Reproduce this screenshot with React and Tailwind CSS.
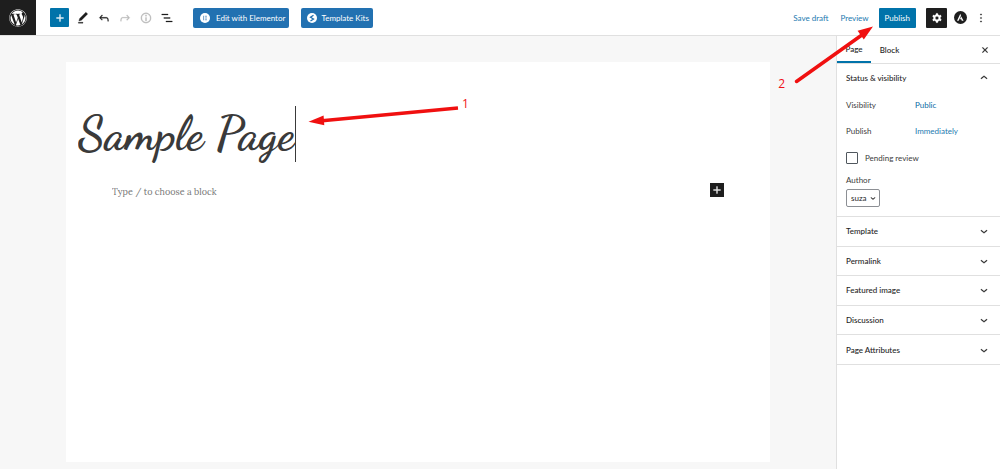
import { useState } from "react";
import { FaWordpress } from "react-icons/fa";

const paths = {
  plus: "M18 11.2h-5.2V6h-1.6v5.2H6v1.6h5.2V18h1.6v-5.2H18z",
  edit: "M20.1 5.1L16.9 2 6.2 12.7l-1.3 4.4 4.5-1.3L20.1 5.1zM4 20.8h8v-1.5H4v1.5z",
  undo: "M18.3 11.7c-.6-.6-1.4-.9-2.3-.9H6.7l2.9-3.3-1.1-1-4.5 5L8.5 16l1-1-2.7-2.7H16c.5 0 .9.2 1.3.5 1 1 1 3.4 1 4.5v.3h1.5v-.2c0-1.5 0-4.3-1.5-5.7z",
  redo: "M15.6 6.5l-1.1 1 2.9 3.3H8c-.9 0-1.7.3-2.3.9-1.4 1.5-1.4 4.2-1.4 5.6v.2h1.5v-.3c0-1.1 0-3.5 1-4.5.3-.3.7-.5 1.3-.5h9.2L14.5 15l1.1 1.1 4.6-4.6-4.6-5z",
  info: "M12 3.2c-4.8 0-8.8 3.9-8.8 8.8 0 4.8 3.9 8.8 8.8 8.8 4.8 0 8.8-3.9 8.8-8.8 0-4.8-4-8.8-8.8-8.8zm0 16c-4 0-7.2-3.3-7.2-7.2C4.8 8 8 4.8 12 4.8s7.2 3.3 7.2 7.2c0 4-3.2 7.2-7.2 7.2zM11 17h2v-6h-2v6zm0-8h2V7h-2v2z",
  list: "M13.8 5.2H3v1.5h10.8V5.2zm-3.6 12v1.5H21v-1.5H10.2zm7.2-6H6.6v1.5h10.8v-1.5z",
  close: "M12 13.06l3.712 3.713 1.061-1.06L13.061 12l3.712-3.712-1.06-1.06L12 10.938 8.288 7.227l-1.061 1.06L10.939 12l-3.712 3.712 1.06 1.061L12 13.061z",
  down: "M17.5 11.6L12 16l-5.5-4.4.9-1.2L12 14l4.5-3.6 1 1.2z",
  up: "M6.5 12.4L12 8l5.5 4.4-.9 1.2L12 10l-4.5 3.6-1-1.2z",
  more: "M13 19h-2v-2h2v2zm0-6h-2v-2h2v2zm0-6h-2V5h2v2z",
  cog: "M10.289 4.836A1 1 0 0111.275 4h1.306a1 1 0 01.987.836l.244 1.466c.787.26 1.503.679 2.108 1.218l1.393-.522a1 1 0 011.216.437l.653 1.13a1 1 0 01-.23 1.273l-1.148.944a6.025 6.025 0 010 2.435l1.149.946a1 1 0 01.23 1.272l-.653 1.13a1 1 0 01-1.216.437l-1.394-.522c-.605.54-1.32.958-2.108 1.218l-.244 1.466a1 1 0 01-.987.836h-1.306a1 1 0 01-.986-.836l-.244-1.466a5.995 5.995 0 01-2.108-1.218l-1.394.522a1 1 0 01-1.217-.436l-.653-1.131a1 1 0 01.23-1.272l1.149-.946a6.026 6.026 0 010-2.435l-1.148-.944a1 1 0 01-.23-1.272l.653-1.131a1 1 0 011.217-.437l1.393.522a5.994 5.994 0 012.108-1.218l.244-1.466zM14.929 12a3 3 0 11-6 0 3 3 0 016 0z",
};

function Icon({ name, className = "size-3.5" }) {
  return (
    <svg viewBox="0 0 24 24" className={className} fill="currentColor" stroke="currentColor" strokeWidth="0.5" aria-hidden="true">
      <path fillRule="evenodd" d={paths[name]} />
    </svg>
  );
}

function ToolButton({ icon, label, className = "" }) {
  return (
    <button type="button" aria-label={label} className={`flex items-center justify-center ${className}`}>
      <Icon name={icon} />
    </button>
  );
}

function Header() {
  return (
    <header className="flex h-9 shrink-0 items-center border-b border-[#e0e0e0] bg-white">
      <a href="#dashboard" aria-label="View pages" className="flex w-9 items-center justify-center self-stretch bg-[#1e1e1e] text-white">
        <FaWordpress className="size-[18px]" />
      </a>
      <div className="ml-3.5 flex items-center gap-[7px] text-[#1e1e1e]">
        <button type="button" aria-label="Add block" className="flex size-[19px] items-center justify-center rounded-[1px] bg-[#0073aa] text-white">
          <Icon name="plus" />
        </button>
        <ToolButton icon="edit" label="Tools" />
        <ToolButton icon="undo" label="Undo" />
        <ToolButton icon="redo" label="Redo" className="text-[#bbbbbb]" />
        <ToolButton icon="info" label="Details" className="text-[#bbbbbb]" />
        <ToolButton icon="list" label="List view" />
      </div>
      <div className="ml-[19px] flex gap-3 text-[8px] text-white">
        <button type="button" className="flex h-5 items-center gap-1.5 rounded-xs bg-[#2271b1] pr-1 pl-[7px]">
          <svg viewBox="0 0 20 20" className="size-2.5" aria-hidden="true">
            <circle cx="10" cy="10" r="10" fill="#fff" />
            <path d="M6 5.5h2v9H6zM9.5 5.5H14v2H9.5zM9.5 9H14v2H9.5zM9.5 12.5H14v2H9.5z" fill="#7fa9d0" />
          </svg>
          Edit with Elementor
        </button>
        <button type="button" className="flex h-5 items-center gap-1 rounded-xs bg-[#2271b1] pr-1 pl-1.5">
          <svg viewBox="0 0 20 20" className="size-2.5" aria-hidden="true">
            <circle cx="10" cy="10" r="10" fill="#fff" />
            <path d="M13 4.5L7 8.5l6 3.5-6 4" fill="none" stroke="#2271b1" strokeWidth="2.6" />
          </svg>
          Template Kits
        </button>
      </div>
      <div className="ml-auto flex items-center pr-3 text-[8px] text-[#1c7ab0]">
        <button type="button" className="mr-3">Save draft</button>
        <button type="button" className="mr-2.5">Preview</button>
        <button type="button" className="mr-2.5 h-5 rounded-[1px] bg-[#0073aa] px-1.5 text-white">Publish</button>
        <button type="button" aria-label="Settings" className="mr-[7px] flex h-5 w-[21px] items-center justify-center rounded-[1px] bg-[#1e1e1e] text-white">
          <Icon name="cog" />
        </button>
        <button type="button" aria-label="Astra settings" className="mr-[7px]">
          <svg viewBox="0 0 26 26" className="size-[13px]" aria-hidden="true">
            <circle cx="13" cy="13" r="13" fill="#1e1e1e" />
            <path d="M12.6 5.5L6 19.5h3.2l4.8-10.2zM14.4 11l-2.6 5.4h2.6l1.2 3.1h3.6z" fill="#fff" />
          </svg>
        </button>
        <button type="button" aria-label="Options" className="text-[#1e1e1e]">
          <Icon name="more" />
        </button>
      </div>
    </header>
  );
}

function Editor() {
  const [title, setTitle] = useState("Sample Page");
  return (
    <main className="flex min-w-0 flex-1 bg-[#f7f7f7] px-[66px] pt-[26px] pb-[7px]">
      <section className="flex flex-1 flex-col bg-white pt-[42px]">
        <div className="flex items-center pl-3">
          <input
            aria-label="Add title"
            value={title}
            onChange={(e) => setTitle(e.target.value)}
            className="field-sizing-content h-[60px] font-['Dancing_Script','Liberation_Serif',serif] text-[47px] font-bold text-[#3a3a3a] outline-none"
          />
          <span className="h-14 w-px bg-[#3a3a3a]" />
        </div>
        <div className="mx-[46px] mt-[17px] flex items-center justify-between">
          <input
            aria-label="Empty block"
            placeholder="Type / to choose a block"
            className="min-w-0 flex-1 pt-1 font-['Lora','Liberation_Serif',serif] text-[9px] outline-none placeholder:text-[#757575]"
          />
          <button type="button" aria-label="Add block" className="flex size-3.5 items-center justify-center bg-[#1e1e1e] text-white">
            <Icon name="plus" />
          </button>
        </div>
      </section>
    </main>
  );
}

const panels = ["Template", "Permalink", "Featured image", "Discussion", "Page Attributes"];

function Sidebar() {
  return (
    <aside className="w-[164px] shrink-0 border-l border-[#e0e0e0] bg-white text-[8px] text-[#1e1e1e]">
      <div className="flex h-7 items-stretch border-b border-[#e0e0e0] pr-2">
        <button type="button" className="w-[34px] border-b-2 border-[#0073aa] font-medium">Page</button>
        <button type="button" className="w-[37px] font-medium">Block</button>
        <button type="button" aria-label="Close settings" className="ml-auto">
          <Icon name="close" />
        </button>
      </div>
      <section className="h-[153px] border-b border-[#e0e0e0] px-[9px]">
        <button type="button" className="flex h-7 w-full items-center justify-between font-medium">
          Status &amp; visibility
          <Icon name="up" />
        </button>
        <dl className="grid grid-cols-[69px_1fr] text-[#3c3c3c]">
          <dt className="flex h-[26px] items-center">Visibility</dt>
          <dd className="flex items-center"><button type="button" className="text-[#0a6ba3]">Public</button></dd>
          <dt className="flex h-[26px] items-center">Publish</dt>
          <dd className="flex items-center"><button type="button" className="text-[#1c7ab0]">Immediately</button></dd>
        </dl>
        <label className="flex h-7 items-center gap-[7px] text-[#3c3c3c]">
          <input type="checkbox" className="size-3 appearance-none rounded-[1px] border border-[#50575e] checked:bg-[#0073aa]" />
          Pending review
        </label>
        <label htmlFor="author" className="flex h-4 items-center text-[#3c3c3c]">Author</label>
        <div className="relative mt-px w-[34px]">
          <select id="author" className="h-[18px] w-full appearance-none rounded-xs border border-[#8c8f94] pl-1 text-[8px]">
            <option>suza</option>
          </select>
          <Icon name="down" className="pointer-events-none absolute top-1 right-0.5 size-2.5" />
        </div>
      </section>
      <div className="grid h-[148px] grid-rows-5">
        {panels.map((p) => (
          <button key={p} type="button" className="flex items-center justify-between border-b border-[#e0e0e0] px-[9px] font-medium">
            {p}
            <Icon name="down" />
          </button>
        ))}
      </div>
    </aside>
  );
}

function Annotations() {
  return (
    <div className="pointer-events-none font-['Open_Sans','Noto_Sans',sans-serif] text-xs text-[#f01018]">
      <svg className="absolute top-[100px] left-[300px] h-7 w-40" viewBox="300 100 160 28" aria-hidden="true">
        <path d="M458 108L322 120.7" stroke="#f01010" strokeWidth="3.5" />
        <path d="M308.5 121.8L323.6 115.6L324.3 125.2z" fill="#f01010" />
      </svg>
      <span className="absolute top-24 left-[462px]">1</span>
      <svg className="absolute top-5 right-[120px] h-[66px] w-[90px]" viewBox="790 20 90 66" aria-hidden="true">
        <path d="M796.5 81.5L864 33.5" stroke="#f01010" strokeWidth="3.5" strokeLinecap="round" />
        <path d="M873 26.5L863.8 39.6L857.6 30.8z" fill="#f01010" />
      </svg>
      <span className="absolute top-[76px] right-[215px]">2</span>
    </div>
  );
}

export default function App() {
  return (
    <div className="relative flex min-h-screen flex-col bg-white font-['Lato','Open_Sans',sans-serif]">
      <Header />
      <div className="flex flex-1">
        <Editor />
        <Sidebar />
      </div>
      <Annotations />
    </div>
  );
}
